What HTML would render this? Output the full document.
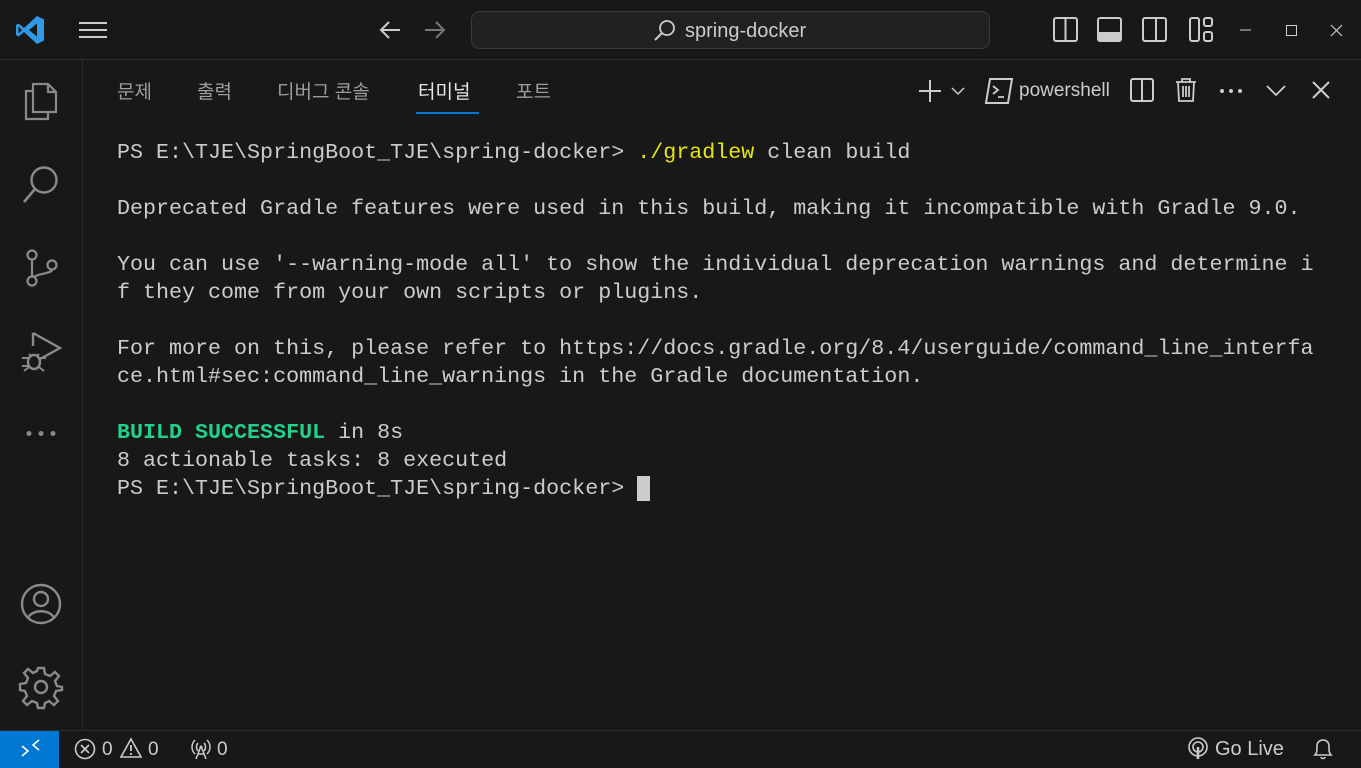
<!DOCTYPE html>
<html><head><meta charset="utf-8"><style>
*{margin:0;padding:0;box-sizing:border-box}
body{width:1361px;height:768px;background:#181818;overflow:hidden;position:relative;font-family:"Segoe UI","Liberation Sans","Noto Sans CJK KR",sans-serif;color:#ccc}
.abs{position:absolute}
#title{left:0;top:0;width:1361px;height:60px;border-bottom:1px solid #2b2b2b}
#act{left:0;top:60px;width:83px;height:670px;border-right:1px solid #2b2b2b}
#status{left:0;top:730px;width:1361px;height:38px;border-top:1px solid #2b2b2b;background:#181818}
.tab{position:absolute;top:77px;font-size:19px;color:#9d9d9d;font-family:"Liberation Sans","Noto Sans CJK KR",sans-serif}
#term{left:117px;top:139px;font-family:"Liberation Mono",monospace;font-size:21.68px;line-height:28px;color:#cccccc;white-space:pre}
svg{position:absolute;overflow:visible}
</style></head><body>
<div id="title" class="abs"></div>
<svg style="left:14px;top:14px" width="32" height="32" viewBox="0 0 32 32"><path d="M23 2 L30 5.5 V26.5 L23 30 L10 18 L4.5 22.5 L2 21 V11 L4.5 9.5 L10 14 Z M23 9.5 L15 16 L23 22.5 Z M4.5 12.5 V19.5 L8 16Z" fill="#2f9ae8"/></svg>
<svg style="left:78px;top:21px" width="30" height="18"><path d="M1 2H29M1 9H29M1 16H29" stroke="#ccc" stroke-width="2"/></svg>
<svg style="left:378px;top:20px" width="24" height="20"><path d="M22 10H3M11 2L3 10L11 18" stroke="#ccc" stroke-width="2" fill="none"/></svg>
<svg style="left:423px;top:20px" width="24" height="20"><path d="M2 10H21M13 2L21 10L13 18" stroke="#777" stroke-width="2" fill="none"/></svg>
<div class="abs" style="left:471px;top:11px;width:519px;height:38px;border:1px solid #3a3a3a;border-radius:9px;background:#212121"></div>
<svg style="left:653px;top:19px" width="24" height="24"><circle cx="14" cy="9" r="7" stroke="#ccc" stroke-width="1.8" fill="none"/><path d="M9 14L2 21" stroke="#ccc" stroke-width="2"/></svg>
<div class="abs" style="left:685px;top:20px;font-size:20px;color:#ccc">spring-docker</div>
<svg style="left:1053px;top:17px" width="26" height="26"><rect x="1" y="1" width="23" height="23" rx="2" stroke="#ccc" stroke-width="2" fill="none"/><path d="M12.5 1V24" stroke="#ccc" stroke-width="2"/></svg>
<svg style="left:1097px;top:17px" width="26" height="26"><rect x="1" y="1" width="23" height="23" rx="2" stroke="#ccc" stroke-width="2" fill="none"/><rect x="1" y="15" width="23" height="9" fill="#ccc"/></svg>
<svg style="left:1142px;top:17px" width="26" height="26"><rect x="1" y="1" width="23" height="23" rx="2" stroke="#ccc" stroke-width="2" fill="none"/><path d="M14 1V24" stroke="#ccc" stroke-width="2"/></svg>
<svg style="left:1189px;top:17px" width="26" height="26"><rect x="1" y="1" width="9" height="23" rx="2" stroke="#ccc" stroke-width="2" fill="none"/><rect x="15" y="1" width="8" height="8" rx="2" stroke="#ccc" stroke-width="2" fill="none"/><rect x="15" y="15" width="8" height="9" rx="2" stroke="#ccc" stroke-width="2" fill="none"/></svg>
<svg style="left:1240px;top:29px" width="12" height="2"><path d="M0 1H11" stroke="#ccc" stroke-width="1"/></svg>
<svg style="left:1286px;top:25px" width="12" height="12"><rect x="0.5" y="0.5" width="10" height="10" stroke="#ccc" fill="none"/></svg>
<svg style="left:1331px;top:25px" width="12" height="12"><path d="M0 0L11 11M11 0L0 11" stroke="#ccc" stroke-width="1.2"/></svg>

<div id="act" class="abs"></div>
<svg style="left:22px;top:81px" width="38" height="42"><path d="M11 3H26L34 11V31H11Z M26 3V11H34" stroke="#8a8a8a" stroke-width="2.2" fill="none"/><path d="M11 10H4V38H26V31" stroke="#8a8a8a" stroke-width="2.2" fill="none"/></svg>
<svg style="left:22px;top:164px" width="40" height="40"><circle cx="22" cy="16" r="12.5" stroke="#8a8a8a" stroke-width="2.4" fill="none"/><path d="M13 25L2 38" stroke="#8a8a8a" stroke-width="2.6"/></svg>
<svg style="left:24px;top:248px" width="36" height="42"><circle cx="8" cy="7" r="4.5" stroke="#8a8a8a" stroke-width="2.2" fill="none"/><circle cx="8" cy="33" r="4.5" stroke="#8a8a8a" stroke-width="2.2" fill="none"/><circle cx="28" cy="17" r="4.5" stroke="#8a8a8a" stroke-width="2.2" fill="none"/><path d="M8 11.5V28.5M28 21.5C28 26 14 25 10 29" stroke="#8a8a8a" stroke-width="2.2" fill="none"/></svg>
<svg style="left:20px;top:330px" width="44" height="44"><path d="M13 3L40 18L20 29" stroke="#8a8a8a" stroke-width="2.4" fill="none"/><path d="M13 3V16" stroke="#8a8a8a" stroke-width="2.4"/><ellipse cx="14" cy="32" rx="6" ry="7" stroke="#8a8a8a" stroke-width="2.4" fill="none"/><path d="M2 28H8M2 36H8M20 28H26M4 41L9 37M24 41L19 37M9 24L11 26M19 24L17 26" stroke="#8a8a8a" stroke-width="2"/></svg>
<svg style="left:24px;top:430px" width="36" height="8"><circle cx="5" cy="3.5" r="2.5" fill="#8a8a8a"/><circle cx="17" cy="3.5" r="2.5" fill="#8a8a8a"/><circle cx="29" cy="3.5" r="2.5" fill="#8a8a8a"/></svg>
<svg style="left:20px;top:583px" width="44" height="44"><circle cx="21" cy="21" r="19" stroke="#8a8a8a" stroke-width="2.4" fill="none"/><circle cx="21" cy="16" r="7" stroke="#8a8a8a" stroke-width="2.4" fill="none"/><path d="M8 35C12 26 30 26 34 35" stroke="#8a8a8a" stroke-width="2.4" fill="none"/></svg>
<svg style="left:20px;top:666px" width="44" height="44" viewBox="0 0 44 44"><g stroke="#8a8a8a" stroke-width="2.4" fill="none"><circle cx="21" cy="21" r="6"/><path d="M18 2H24L25 8L30 10L35 6L39 10L35 15L37 20L42 21V24L36 25L34 30L38 35L34 39L29 35L25 37L24 42H18L17 37L12 35L7 39L3 35L7 30L5 25L0 24V18L6 17L8 12L4 7L8 3L13 7L17 5Z"/></g></svg>

<div class="tab" style="left:117px">문제</div>
<div class="tab" style="left:197px">출력</div>
<div class="tab" style="left:277px">디버그 콘솔</div>
<div class="tab" style="left:418px;color:#e7e7e7">터미널</div>
<div class="abs" style="left:416px;top:112px;width:63px;height:2px;background:#0078d4"></div>
<div class="tab" style="left:516px">포트</div>
<svg style="left:918px;top:79px" width="24" height="24"><path d="M12 1V23M1 12H23" stroke="#ccc" stroke-width="2"/></svg>
<svg style="left:951px;top:86px" width="14" height="10"><path d="M1 2L7 8L13 2" stroke="#ccc" stroke-width="1.5" fill="none"/></svg>
<svg style="left:985px;top:78px" width="28" height="26"><path d="M5 1H27L23 25H1Z" stroke="#ccc" stroke-width="2" fill="none"/><path d="M8 8L13 12L8 16M13 19H19" stroke="#ccc" stroke-width="1.8" fill="none"/></svg>
<div class="abs" style="left:1019px;top:80px;font-size:19px;color:#ccc">powershell</div>
<svg style="left:1130px;top:78px" width="24" height="24"><rect x="1" y="1" width="22" height="22" rx="2" stroke="#ccc" stroke-width="2" fill="none"/><path d="M12 1V23" stroke="#ccc" stroke-width="2"/></svg>
<svg style="left:1175px;top:77px" width="22" height="26"><path d="M1 5H21M7 5V2H15V5M3 5L4 24H18L19 5M8 9V20M11 9V20M14 9V20" stroke="#ccc" stroke-width="1.8" fill="none"/></svg>
<svg style="left:1219px;top:88px" width="24" height="6"><circle cx="3" cy="3" r="2" fill="#ccc"/><circle cx="12" cy="3" r="2" fill="#ccc"/><circle cx="21" cy="3" r="2" fill="#ccc"/></svg>
<svg style="left:1266px;top:85px" width="20" height="12"><path d="M1 1L10 10L19 1" stroke="#ccc" stroke-width="1.8" fill="none"/></svg>
<svg style="left:1312px;top:81px" width="18" height="18"><path d="M1 1L17 17M17 1L1 17" stroke="#ccc" stroke-width="2"/></svg>

<div id="term" class="abs">PS E:\TJE\SpringBoot_TJE\spring-docker> <span style="color:#e5e510">./gradlew</span> clean build

Deprecated Gradle features were used in this build, making it incompatible with Gradle 9.0.

You can use '--warning-mode all' to show the individual deprecation warnings and determine i
f they come from your own scripts or plugins.

For more on this, please refer to https://docs.gradle.org/8.4/userguide/command_line_interfa
ce.html#sec:command_line_warnings in the Gradle documentation.

<span style="color:#23d18b;font-weight:bold">BUILD SUCCESSFUL</span> in 8s
8 actionable tasks: 8 executed
PS E:\TJE\SpringBoot_TJE\spring-docker> <span style="background:#ccc"> </span></div>

<div id="status" class="abs"></div>
<div class="abs" style="left:0;top:731px;width:59px;height:37px;background:#0078d4"></div>
<svg style="left:20px;top:738px" width="22" height="20"><path d="M2 8L8 13L2 18M19 2L13 7L19 12" stroke="#fff" stroke-width="1.6" fill="none"/></svg>
<svg style="left:74px;top:738px" width="22" height="22"><circle cx="11" cy="11" r="9.5" stroke="#ccc" stroke-width="1.6" fill="none"/><path d="M7 7L15 15M15 7L7 15" stroke="#ccc" stroke-width="1.6"/></svg>
<div class="abs" style="left:102px;top:739px;font-size:19px;color:#ccc">0</div>
<svg style="left:120px;top:738px" width="22" height="20"><path d="M11 1L21 19H1Z" stroke="#ccc" stroke-width="1.6" fill="none"/><path d="M11 7V13M11 15V17" stroke="#ccc" stroke-width="1.8"/></svg>
<div class="abs" style="left:148px;top:739px;font-size:19px;color:#ccc">0</div>
<svg style="left:190px;top:738px" width="22" height="22"><path d="M5 2C1 6 1 12 5 16M17 2C21 6 21 12 17 16M8 5C6 7 6 11 8 13M14 5C16 7 16 11 14 13M11 8L6 21M11 8L16 21M8 16H14" stroke="#ccc" stroke-width="1.5" fill="none"/><circle cx="11" cy="9" r="1.5" fill="#ccc"/></svg>
<div class="abs" style="left:217px;top:739px;font-size:19px;color:#ccc">0</div>
<svg style="left:1187px;top:737px" width="22" height="24"><circle cx="11" cy="10" r="9" stroke="#ccc" stroke-width="1.6" fill="none"/><circle cx="11" cy="10" r="5" stroke="#ccc" stroke-width="1.6" fill="none"/><path d="M11 10V22" stroke="#ccc" stroke-width="2.5"/></svg>
<div class="abs" style="left:1215px;top:738px;font-size:20px;color:#ccc">Go Live</div>
<svg style="left:1312px;top:737px" width="22" height="24"><path d="M3 18C5 16 5 14 5 9C5 5 8 3 11 3C14 3 17 5 17 9C17 14 17 16 19 18Z M9 20C9 22 13 22 13 20" stroke="#ccc" stroke-width="1.6" fill="none"/></svg>
</body></html>
